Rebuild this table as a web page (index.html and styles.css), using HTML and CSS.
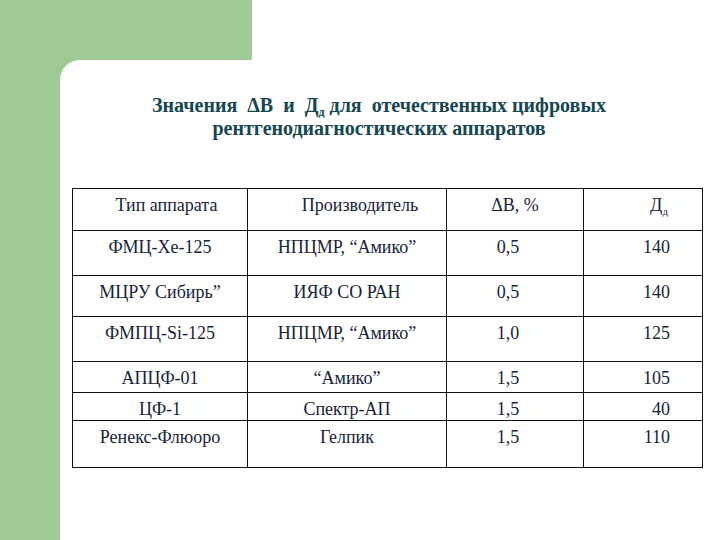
FILE: index.html
```html
<!DOCTYPE html>
<html lang="ru">
<head>
<meta charset="utf-8">
<link rel="stylesheet" href="styles.css">
</head>
<body>
<div class="page">
  <div class="top">
    <div class="top-green"></div>
  </div>
  <div class="main">
    <div class="side"></div>
    <div class="sheet">
      <h1 class="title">Значения&nbsp; ΔВ&nbsp; и&nbsp; Д<sub>д</sub> для&nbsp; отечественных цифровых<br>рентгенодиагностических аппаратов</h1>
      <table class="data">
        <colgroup>
          <col class="c1"><col class="c2"><col class="c3"><col class="c4">
        </colgroup>
        <tr class="r-head">
          <td class="h1">Тип аппарата</td>
          <td class="h2">Производитель</td>
          <td class="h3">ΔВ, %</td>
          <td class="num hd">Д<sub>д</sub></td>
        </tr>
        <tr class="r-tall">
          <td>ФМЦ-Хе-125</td>
          <td>НПЦМР, “Амико”</td>
          <td class="val">0,5</td>
          <td class="num">140</td>
        </tr>
        <tr class="r-mid">
          <td>МЦРУ Сибирь”</td>
          <td>ИЯФ СО РАН</td>
          <td class="val">0,5</td>
          <td class="num">140</td>
        </tr>
        <tr class="r-tall">
          <td>ФМПЦ-Si-125</td>
          <td>НПЦМР, “Амико”</td>
          <td class="val">1,0</td>
          <td class="num">125</td>
        </tr>
        <tr class="r-short">
          <td>АПЦФ-01</td>
          <td>“Амико”</td>
          <td class="val">1,5</td>
          <td class="num">105</td>
        </tr>
        <tr class="r-shorter">
          <td>ЦФ-1</td>
          <td>Спектр-АП</td>
          <td class="val">1,5</td>
          <td class="num">40</td>
        </tr>
        <tr class="r-last">
          <td>Ренекс-Флюоро</td>
          <td>Гелпик</td>
          <td class="val">1,5</td>
          <td class="num">110</td>
        </tr>
      </table>
    </div>
  </div>
</div>
</body>
</html>
```

FILE: styles.css
```css
html, body {
  margin: 0;
  padding: 0;
  background: #ffffff;
  font-family: "Liberation Serif", "Times New Roman", serif;
}
.page {
  width: 720px;
  height: 540px;
  display: flex;
  flex-direction: column;
  overflow: hidden;
}
.top {
  height: 60px;
  display: flex;
  flex: none;
}
.top-green {
  width: 252px;
  background: #9dca95;
}
.main {
  flex: 1;
  display: flex;
  background: linear-gradient(to right, #9dca95 0, #9dca95 100px, #ffffff 100px);
}
.side {
  width: 60px;
  flex: none;
  background: #9dca95;
}
.sheet {
  flex: 1;
  background: #ffffff;
  border-top-left-radius: 20px;
  padding: 34px 0 0 12px;
}
.title {
  margin: 0 34px 0 0;
  font-family: "Liberation Serif", "Times New Roman", serif;
  font-weight: bold;
  font-size: 20px;
  line-height: 23px;
  color: #164651;
  text-align: center;
}
.title sub {
  font-size: 12px;
  vertical-align: -4px;
  line-height: 0;
}
.data {
  margin-top: 48px;
  border-collapse: collapse;
  table-layout: fixed;
  width: 630px;
  font-family: "Liberation Serif", "Times New Roman", serif;
  font-size: 18px;
  color: #17233a;
}
.c1 { width: 175px; }
.c2 { width: 199px; }
.c3 { width: 137px; }
.c4 { width: 119px; }
.data td {
  border: 1.5px solid #111111;
  padding: 6px 0 0 0;
  line-height: 20px;
  vertical-align: top;
  text-align: center;
  white-space: nowrap;
}
.data sub {
  font-size: 11px;
  vertical-align: -4px;
  line-height: 0;
}
.r-head td { height: 35px; }
.r-tall td { height: 38px; }
.r-mid td { height: 34px; }
.r-short td { height: 24px; }
.r-shorter td { height: 21px; }
.r-last td { height: 40px; }
.data td.h1 { padding-left: 13px; }
.data td.h2 { padding-left: 26px; }
.data td.val { padding-right: 14px; }
.data td.num {
  text-align: right;
  padding-right: 32px;
}
.data td.hd { padding-right: 34px; }
```
